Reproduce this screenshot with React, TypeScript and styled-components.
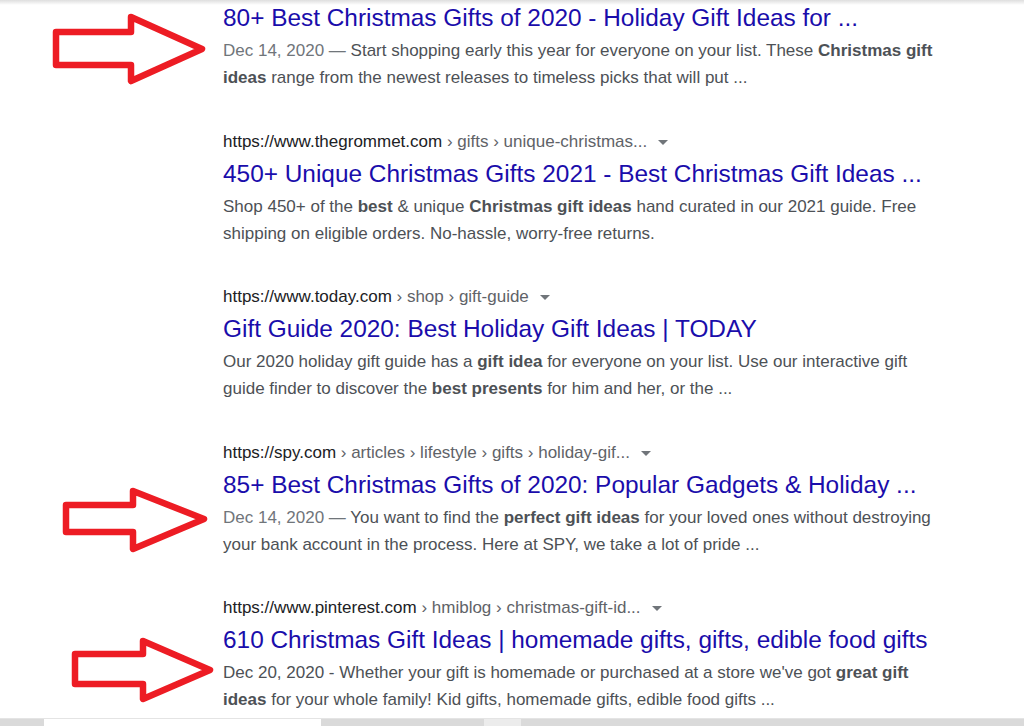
import React from "react";
import styled, { createGlobalStyle } from "styled-components";

const GlobalStyle = createGlobalStyle`
  html, body { margin: 0; padding: 0; background: #ffffff; overflow: hidden; }
  body { font-family: "Liberation Sans", Arial, sans-serif; }
`;

const Page = styled.div`
  position: relative;
  width: 1024px;
  height: 726px;
  display: flex;
  flex-direction: column;
  background: #fff;
  overflow: hidden;
`;

const TopShade = styled.div`
  height: 5px;
  flex: none;
  background: linear-gradient(to bottom, rgba(0, 0, 0, 0.13), rgba(0, 0, 0, 0));
  margin-bottom: -5px;
  position: relative;
  z-index: 1;
`;

const Content = styled.main`
  flex: 1;
  display: flex;
  flex-direction: column;
  gap: 39.5px;
  padding: 2px 0 0 223px;
  overflow: hidden;
`;

const Result = styled.section`
  display: flex;
  flex-direction: column;
`;

const UrlRow = styled.div`
  display: flex;
  align-items: center;
  height: 22px;
  font-size: 17px;
  line-height: 22px;
  color: #5f6368;
  white-space: nowrap;
  margin-bottom: 5px;
`;

const UrlText = styled.span``;

const Domain = styled.span`
  color: #202124;
`;

const Caret = styled.span`
  display: inline-block;
  width: 0;
  height: 0;
  margin-left: 11px;
  margin-top: 1px;
  border-left: 5px solid transparent;
  border-right: 5px solid transparent;
  border-top: 5px solid #70757a;
`;

const Title = styled.a`
  display: block;
  font-size: 24.4px;
  line-height: 32px;
  height: 32px;
  color: #1a0dab;
  text-decoration: none;
  white-space: nowrap;
  margin-bottom: 3px;
`;

const Snippet = styled.div`
  font-size: 17px;
  line-height: 27px;
  color: #4d5156;
`;

const Line = styled.div`
  white-space: nowrap;
`;

const DateText = styled.span<{ $muted?: boolean }>`
  color: ${(p) => (p.$muted ? "#70757a" : "#4d5156")};
`;

const B = styled.b`
  font-weight: 700;
  color: #4d5156;
`;

const BottomStrip = styled.div`
  flex: none;
  height: 8px;
  display: flex;
  background: #dadada;
`;

const StripSeg = styled.div<{ $w: number; $bg: string }>`
  width: ${(p) => p.$w}px;
  flex: none;
  background: ${(p) => p.$bg};
  border-top: 1px solid #e4e4e4;
`;

const Arrows = styled.svg`
  position: absolute;
  left: 0;
  top: 0;
  pointer-events: none;
`;

type Crumb = { domain: string; path: string[] };

const Url = ({ domain, path }: Crumb) => (
  <UrlRow>
    <UrlText>
      <Domain>{domain}</Domain>
      {path.map((p) => ` › ${p}`).join("")}
    </UrlText>
    <Caret />
  </UrlRow>
);

const arrowPts = (
  sl: number,
  st: number,
  sb: number,
  hb: number,
  ht: number,
  hbot: number,
  tx: number,
  ty: number
) =>
  `${sl},${st} ${hb},${st} ${hb},${ht} ${tx},${ty} ${hb},${hbot} ${hb},${sb} ${sl},${sb}`;

export default function App() {
  return (
    <>
      <GlobalStyle />
      <Page>
        <TopShade />
        <Content>
          <Result>
            <Title href="#">80+ Best Christmas Gifts of 2020 - Holiday Gift Ideas for ...</Title>
            <Snippet>
              <Line>
                <DateText $muted>Dec 14, 2020 — </DateText>Start shopping early this year for everyone on your list. These{" "}
                <B>Christmas gift</B>
              </Line>
              <Line>
                <B>ideas</B> range from the newest releases to timeless picks that will put ...
              </Line>
            </Snippet>
          </Result>

          <Result>
            <Url domain="https://www.thegrommet.com" path={["gifts", "unique-christmas..."]} />
            <Title href="#">450+ Unique Christmas Gifts 2021 - Best Christmas Gift Ideas ...</Title>
            <Snippet>
              <Line>
                Shop 450+ of the <B>best</B> &amp; unique <B>Christmas gift ideas</B> hand curated in our 2021 guide. Free
              </Line>
              <Line>shipping on eligible orders. No-hassle, worry-free returns.</Line>
            </Snippet>
          </Result>

          <Result>
            <Url domain="https://www.today.com" path={["shop", "gift-guide"]} />
            <Title href="#">Gift Guide 2020: Best Holiday Gift Ideas | TODAY</Title>
            <Snippet>
              <Line>
                Our 2020 holiday gift guide has a <B>gift idea</B> for everyone on your list. Use our interactive gift
              </Line>
              <Line>
                guide finder to discover the <B>best presents</B> for him and her, or the ...
              </Line>
            </Snippet>
          </Result>

          <Result>
            <Url domain="https://spy.com" path={["articles", "lifestyle", "gifts", "holiday-gif..."]} />
            <Title href="#">85+ Best Christmas Gifts of 2020: Popular Gadgets &amp; Holiday ...</Title>
            <Snippet>
              <Line>
                <DateText $muted>Dec 14, 2020 — </DateText>You want to find the <B>perfect gift ideas</B> for your loved ones without destroying
              </Line>
              <Line>your bank account in the process. Here at SPY, we take a lot of pride ...</Line>
            </Snippet>
          </Result>

          <Result>
            <Url domain="https://www.pinterest.com" path={["hmiblog", "christmas-gift-id..."]} />
            <Title href="#">610 Christmas Gift Ideas | homemade gifts, gifts, edible food gifts</Title>
            <Snippet>
              <Line>
                <DateText>Dec 20, 2020 - </DateText>Whether your gift is homemade or purchased at a store we've got{" "}
                <B>great gift</B>
              </Line>
              <Line>
                <B>ideas</B> for your whole family! Kid gifts, homemade gifts, edible food gifts ...
              </Line>
            </Snippet>
          </Result>
        </Content>

        <BottomStrip>
          <StripSeg $w={44} $bg="#dadada" />
          <StripSeg $w={277} $bg="#ffffff" />
          <StripSeg $w={163} $bg="#dadada" />
          <StripSeg $w={37} $bg="#ececec" />
          <StripSeg $w={503} $bg="#dadada" />
        </BottomStrip>

        <Arrows width="1024" height="726" viewBox="0 0 1024 726">
          <g fill="none" stroke="#ed1c24" strokeWidth="6.5" strokeLinejoin="round">
            <polygon points={arrowPts(56, 32, 65, 131, 17, 81, 202, 49)} />
            <polygon points={arrowPts(66, 505, 532, 133, 491, 549, 204, 519)} />
            <polygon points={arrowPts(75, 654, 684, 143, 641, 699, 210, 670)} />
          </g>
        </Arrows>
      </Page>
    </>
  );
}
